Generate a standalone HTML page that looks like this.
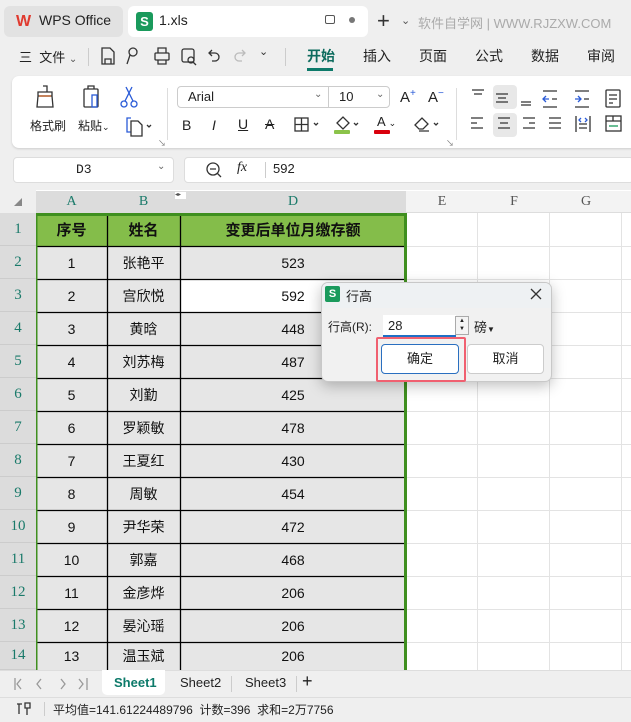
<!DOCTYPE html>
<html><head><meta charset="utf-8"><style>
*{margin:0;padding:0;box-sizing:border-box}
body{width:631px;height:722px;overflow:hidden;background:#efefef;font-family:"Liberation Sans","Noto Sans CJK SC",sans-serif;position:relative;color:#222}
.a{position:absolute}
.ic{position:absolute;font-size:15px;color:#333}
.cell{position:absolute;display:flex;align-items:center;justify-content:center;font-size:14px;color:#111}
.rh{position:absolute;left:0;width:36px;display:flex;align-items:center;justify-content:center;color:#1a7a6a;font-size:15px;font-family:"Liberation Serif",serif;background:#dcdcdc;border-bottom:1px solid #ccc}
.ch{position:absolute;top:191px;height:22px;display:flex;align-items:center;justify-content:center;color:#1a7a6a;font-size:14px;font-family:"Liberation Serif",serif}
svg.s{position:absolute;fill:none;stroke:#333;stroke-width:1.3}
</style></head><body>
<!-- tabs -->
<div class="a" style="left:4px;top:6px;width:119px;height:31px;background:#e2e2e2;border-radius:6px"></div>
<div class="a" style="left:16px;top:13px;font-weight:bold;color:#e03a2f;font-size:16px">W</div>
<div class="a" style="left:39px;top:12px;font-size:14px">WPS Office</div>
<div class="a" style="left:128px;top:6px;width:240px;height:31px;background:#fff;border-radius:6px"></div>
<div class="a" style="left:136px;top:12px;width:17px;height:19px;background:#1a9a5c;border-radius:3px;color:#fff;font-size:13px;font-weight:bold;text-align:center;line-height:19px">S</div>
<div class="a" style="left:159px;top:12px;font-size:14px">1.xls</div>
<div class="a" style="left:325px;top:15px;width:10px;height:9px;border:1.3px solid #555;border-radius:2px"></div>
<div class="a" style="left:349px;top:17px;width:6px;height:6px;border-radius:3px;background:#777"></div>
<div class="a" style="left:377px;top:8px;font-size:22px;color:#333">+</div>
<div class="a" style="left:401px;top:14px;font-size:11px;color:#555">⌄</div>
<div class="a" style="left:418px;top:13px;font-size:13px;color:#aaa">软件自学网 | WWW.RJZXW.COM</div>
<!-- menu -->
<div class="a" style="left:19px;top:47px;font-size:13px">三&nbsp; 文件 <span style="font-size:10px;color:#555">⌄</span></div>
<div class="a" style="left:88px;top:48px;width:1px;height:18px;background:#ccc"></div>
<svg class="s" style="left:100px;top:46px" width="150" height="20">
<path d="M2 2h8l4 4v12H2z M5 18v-5h6v5"/>
<circle cx="33" cy="6" r="4"/><path d="M30 9l-3 9"/>
<rect x="55" y="7" width="14" height="7" rx="1"/><path d="M58 7V2h8v5 M58 14v4h8v-4"/>
<rect x="82" y="3" width="12" height="13" rx="2"/><circle cx="91" cy="14" r="3"/><path d="M93 16l3 3"/>
<path d="M112 4l-3 3 3 3 M109 7h6a4 4 0 010 8h-3"/>
<path d="M142 4l3 3-3 3 M145 7h-6a4 4 0 000 8h3" stroke="#bbb"/>
</svg>
<div class="ic" style="left:259px;top:45px;font-size:11px">⌄</div>
<div class="a" style="left:285px;top:48px;width:1px;height:18px;background:#ccc"></div>
<div class="a" style="left:307px;top:46px;font-size:14px;color:#0d6b5e;font-weight:bold">开始</div>
<div class="a" style="left:307px;top:68px;width:26px;height:3px;background:#0d7a6a"></div>
<div class="a" style="left:363px;top:46px;font-size:14px">插入</div>
<div class="a" style="left:419px;top:46px;font-size:14px">页面</div>
<div class="a" style="left:475px;top:46px;font-size:14px">公式</div>
<div class="a" style="left:531px;top:46px;font-size:14px">数据</div>
<div class="a" style="left:587px;top:46px;font-size:14px">审阅</div>
<!-- ribbon -->
<div class="a" style="left:12px;top:76px;width:630px;height:72px;background:#fff;border-radius:7px;box-shadow:0 1px 2px #ccc"></div>
<svg class="s" style="left:34px;top:84px" width="110" height="26">
<path d="M9 2h4v6 M4 8h14v4H4z M4 12l-1 11h16l-1-11" /><path d="M5 12h12" stroke="#c05a20"/>
<rect x="50" y="5" width="14" height="18" rx="1"/><path d="M54 5V2h6v3"/><rect x="58" y="11" width="5" height="12" stroke="#2a5bd7"/>
<g stroke="#2a5bd7"><circle cx="90" cy="20" r="3"/><circle cx="100" cy="20" r="3"/><path d="M91 17l7-14 M99 17l-7-14"/></g>
</svg>
<div class="a" style="left:30px;top:117px;font-size:12px">格式刷</div>
<div class="a" style="left:78px;top:117px;font-size:12px">粘贴<span style="font-size:9px">⌄</span></div>
<svg class="s" style="left:125px;top:116px" width="30" height="22"><path d="M6 2H2v14h4" stroke="#2a5bd7"/><path d="M6 5h7l4 4v11H6z"/><path d="M22 9l2 2 2-2"/></svg>
<div class="a" style="left:158px;top:138px;font-size:8px;color:#777">↘</div>
<div class="a" style="left:167px;top:88px;width:1px;height:52px;background:#ddd"></div>
<div class="a" style="left:177px;top:86px;width:213px;height:22px;border:1px solid #ccc;border-radius:4px"></div>
<div class="a" style="left:328px;top:86px;width:1px;height:22px;background:#ccc"></div>
<div class="a" style="left:188px;top:89px;font-size:13px">Arial</div>
<div class="a" style="left:314px;top:89px;font-size:10px;color:#666">⌄</div>
<div class="a" style="left:339px;top:89px;font-size:13px">10</div>
<div class="a" style="left:376px;top:89px;font-size:10px;color:#666">⌄</div>
<div class="a" style="left:400px;top:88px;font-size:15px">A<sup style="color:#2a5bd7;font-size:10px">+</sup></div>
<div class="a" style="left:428px;top:88px;font-size:15px">A<sup style="color:#2a5bd7;font-size:10px">−</sup></div>
<div class="a" style="left:182px;top:117px;font-size:14px">B</div>
<div class="a" style="left:212px;top:117px;font-size:14px;font-style:italic">I</div>
<div class="a" style="left:238px;top:116px;font-size:14px;text-decoration:underline">U</div>
<div class="a" style="left:265px;top:116px;font-size:14px;text-decoration:line-through">A</div>
<svg class="s" style="left:294px;top:117px" width="30" height="16"><rect x="1" y="1" width="13" height="13"/><path d="M7.5 1v13M1 7.5h13 M20 6l2 2 2-2"/></svg>
<div class="a" style="left:334px;top:130px;width:16px;height:4px;background:#8bc34a;border-radius:1px"></div>
<svg class="s" style="left:334px;top:115px" width="30" height="16"><path d="M3 8l6-6 6 6-6 6z M20 8l2 2 2-2"/></svg>
<div class="a" style="left:374px;top:130px;width:16px;height:4px;background:#d9000d;border-radius:1px"></div>
<div class="a" style="left:377px;top:114px;font-size:13px">A <span style="font-size:9px">⌄</span></div>
<svg class="s" style="left:413px;top:115px" width="30" height="18"><path d="M2 10l7-7 6 6-5 5H6z M6 16h10 M21 8l2 2 2-2"/></svg>
<div class="a" style="left:446px;top:138px;font-size:8px;color:#777">↘</div>
<div class="a" style="left:456px;top:88px;width:1px;height:52px;background:#ddd"></div>
<div class="a" style="left:493px;top:85px;width:24px;height:24px;background:#e8e8e8;border-radius:4px"></div>
<div class="a" style="left:493px;top:113px;width:24px;height:24px;background:#e8e8e8;border-radius:4px"></div>
<svg class="s" style="left:466px;top:86px" width="165" height="52" stroke-width="1.2">
<path d="M6 4h12 M8 8h8"/>
<path d="M30 8h12 M32 12h8 M30 16h12"/>
<path d="M55 16h10 M55 19h10"/>
<g stroke="#2a5bd7"><path d="M80 10l-3 3 3 3 M77 13h6"/><path d="M112 10l3 3-3 3 M109 13h6"/></g>
<path d="M77 5h14 M86 13h5 M77 21h14 M109 5h14 M118 13h5 M109 21h14"/>
<rect x="140" y="4" width="14" height="17" rx="1"/><path d="M143 9h8 M143 13h8 M143 17h4"/>
<path d="M5 32h12 M5 37h6 M5 42h12 M32 32h12 M34 37h8 M32 42h12 M57 32h12 M63 37h6 M57 42h12 M83 32h12 M83 37h12 M83 42h12"/>
<path d="M110 30v16 M124 30v16 M113 42h8 M113 38h8" /><path d="M115 32l-2 2 2 2 M119 32l2 2-2 2" stroke="#2a5bd7"/>
<rect x="140" y="30" width="15" height="15"/><path d="M140 35h15 M147 30v5"/><path d="M143 40h9" stroke="#1a9a5c"/>
</svg>
<!-- formula bar -->
<div class="a" style="left:13px;top:157px;width:161px;height:26px;background:#fff;border-radius:4px;border:1px solid #ddd"></div>
<div class="a" style="left:76px;top:162px;font-size:13px;font-family:'Liberation Mono',monospace">D3</div>
<div class="a" style="left:157px;top:161px;font-size:10px;color:#666">⌄</div>
<div class="a" style="left:184px;top:157px;width:450px;height:26px;background:#fff;border-radius:4px;border:1px solid #ddd"></div>
<svg class="s" style="left:206px;top:162px" width="18" height="18"><circle cx="7" cy="7" r="6"/><path d="M4 7h6 M11 11l4 4"/></svg>
<div class="a" style="left:237px;top:160px;font-size:14px;font-style:italic;font-family:'Liberation Serif',serif">fx</div>
<div class="a" style="left:265px;top:162px;width:1px;height:16px;background:#ccc"></div>
<div class="a" style="left:273px;top:161px;font-size:13px">592</div>
<!-- grid -->
<div class="a" style="left:0;top:190px;width:631px;height:480px;background:#fff"></div>
<div class="a" style="left:0;top:190px;width:36px;height:23px;background:#efefef"></div>
<div class="a" style="left:14px;top:198px;width:0;height:0;border-left:8px solid transparent;border-bottom:8px solid #888"></div>
<div class="a" style="left:36px;top:191px;width:370px;height:22px;background:#dcdcdc"></div>
<div class="a" style="left:406px;top:191px;width:225px;height:22px;background:#f3f3f3;border-bottom:1px solid #ddd"></div>
<div class="ch" style="left:36px;width:71px">A</div>
<div class="ch" style="left:107px;width:73px">B</div>
<div class="ch" style="left:180px;width:226px">D</div>
<div class="ch" style="left:406px;width:72px;color:#555">E</div>
<div class="ch" style="left:478px;width:72px;color:#555">F</div>
<div class="ch" style="left:550px;width:72px;color:#555">G</div>
<div class="a" style="left:175px;top:192px;width:11px;height:7px;background:#fff;font-size:6px;line-height:7px;color:#555">◂▸</div>
<svg class="a" style="left:0;top:213px" width="631" height="457">
<g stroke="#e3e3e3" stroke-width="1">
<line x1="477.5" y1="0" x2="477.5" y2="457"/><line x1="549.5" y1="0" x2="549.5" y2="457"/><line x1="621.5" y1="0" x2="621.5" y2="457"/>
</g>
<g stroke="#e3e3e3">
<path d="M406 33.5H631M406 66.5H631M406 99.5H631M406 132.5H631M406 165.5H631M406 198.5H631M406 231.5H631M406 264.5H631M406 297.5H631M406 330.5H631M406 363.5H631M406 396.5H631M406 429.5H631"/>
</g>
<rect x="36" y="0" width="370" height="33" fill="#84bd4a"/>
<rect x="36" y="33" width="370" height="424" fill="#e6e6e6"/>
<rect x="180" y="67" width="226" height="33" fill="#fff"/>
<g stroke="#000" stroke-width="1.3">
<path d="M36 33.5H406M36 66.5H406M36 99.5H406M36 132.5H406M36 165.5H406M36 198.5H406M36 231.5H406M36 264.5H406M36 297.5H406M36 330.5H406M36 363.5H406M36 396.5H406M36 429.5H406"/>
<path d="M107.5 0V457M180.5 0V457"/>
</g>
<path d="M36 457V1.5H405.5V457" fill="none" stroke="#3f8f1f" stroke-width="3"/>
</svg>
<div id="rows"></div>
<script>
var d=[["序号","姓名","变更后单位月缴存额"],[1,"张艳平",523],[2,"宫欣悦",592],[3,"黄晗",448],[4,"刘苏梅",487],[5,"刘勤",425],[6,"罗颖敏",478],[7,"王夏红",430],[8,"周敏",454],[9,"尹华荣",472],[10,"郭嘉",468],[11,"金彦烨",206],[12,"晏沁瑶",206],[13,"温玉斌",206]];
var h="";for(var i=0;i<14;i++){var t=213+33*i,hh=i==13?28:33;
h+='<div class="rh" style="top:'+t+'px;height:'+hh+'px">'+(i+1)+'</div>';
var b=i==0?'font-weight:bold;font-size:15px;':'';
h+='<div class="cell" style="'+b+'left:36px;width:71px;top:'+t+'px;height:'+hh+'px">'+d[i][0]+'</div>';
h+='<div class="cell" style="'+b+'left:107px;width:73px;top:'+t+'px;height:'+hh+'px">'+d[i][1]+'</div>';
h+='<div class="cell" style="'+b+'left:180px;width:226px;top:'+t+'px;height:'+hh+'px">'+d[i][2]+'</div>';}
document.getElementById("rows").innerHTML=h;
</script>
<!-- dialog -->
<div class="a" style="left:321px;top:282px;width:231px;height:100px;background:#f1f1f1;border:1px solid #c8c8c8;border-radius:7px;box-shadow:0 4px 14px rgba(0,0,0,.25);overflow:hidden">
<div style="height:25px;background:#eef1f3"></div></div>
<div class="a" style="left:325px;top:286px;width:15px;height:16px;background:#1a9a5c;border-radius:2px;color:#fff;font-size:11px;font-weight:bold;text-align:center;line-height:16px">S</div>
<div class="a" style="left:346px;top:286px;font-size:13px">行高</div>
<svg class="s" style="left:530px;top:288px" width="12" height="12"><path d="M1 1l10 10M11 1L1 11"/></svg>
<div class="a" style="left:328px;top:318px;font-size:12px">行高(R):</div>
<div class="a" style="left:383px;top:315px;width:73px;height:22px;background:#fff;border-bottom:2px solid #1f6fc5"></div>
<div class="a" style="left:388px;top:318px;font-size:13px">28</div>
<div class="a" style="left:455px;top:316px;width:14px;height:19px;border:1px solid #aaa;background:#f4f4f4;font-size:6px;line-height:8px;text-align:center">▲<br>▼</div>
<div class="a" style="left:474px;top:317px;font-size:13px">磅<span style="font-size:8px">▼</span></div>
<div class="a" style="left:376px;top:337px;width:90px;height:45px;border:2px solid #f06070;border-radius:2px"></div>
<div class="a" style="left:381px;top:344px;width:78px;height:30px;background:#fff;border:1.5px solid #2a6fc0;border-radius:4px;font-size:13px;text-align:center;line-height:27px">确定</div>
<div class="a" style="left:467px;top:344px;width:77px;height:30px;background:#fff;border:1px solid #ccc;border-radius:4px;font-size:13px;text-align:center;line-height:28px">取消</div>
<!-- sheet tabs -->
<div class="a" style="left:0;top:670px;width:631px;height:27px;background:#efefef;border-top:1px solid #ddd"></div>
<svg class="s" style="left:13px;top:677px;stroke:#999" width="80" height="14"><path d="M2 1v12 M8 2l-4 5 4 5 M28 2l-4 5 4 5 M48 2l4 5-4 5 M66 2l4 5-4 5 M74 1v12"/></svg>
<div class="a" style="left:102px;top:670px;width:63px;height:25px;background:#fff;border-radius:0 0 5px 5px"></div>
<div class="a" style="left:114px;top:675px;font-size:13px;font-weight:bold;color:#0d7a6a">Sheet1</div>
<div class="a" style="left:180px;top:675px;font-size:13px">Sheet2</div>
<div class="a" style="left:231px;top:676px;width:1px;height:16px;background:#ccc"></div>
<div class="a" style="left:245px;top:675px;font-size:13px">Sheet3</div>
<div class="a" style="left:296px;top:676px;width:1px;height:16px;background:#ccc"></div>
<div class="a" style="left:302px;top:671px;font-size:18px">+</div>
<!-- status -->
<div class="a" style="left:0;top:697px;width:631px;height:25px;background:#efefef;border-top:1px solid #ddd"></div>
<svg class="s" style="left:16px;top:702px" width="16" height="14"><path d="M1 2h5 M3 2v10 M9 1h5v5H9z M11 6v7"/></svg>
<div class="a" style="left:44px;top:702px;width:1px;height:14px;background:#ccc"></div>
<div class="a" style="left:53px;top:701px;font-size:12px">平均值=141.61224489796&nbsp; 计数=396&nbsp; 求和=2万7756</div>
</body></html>
